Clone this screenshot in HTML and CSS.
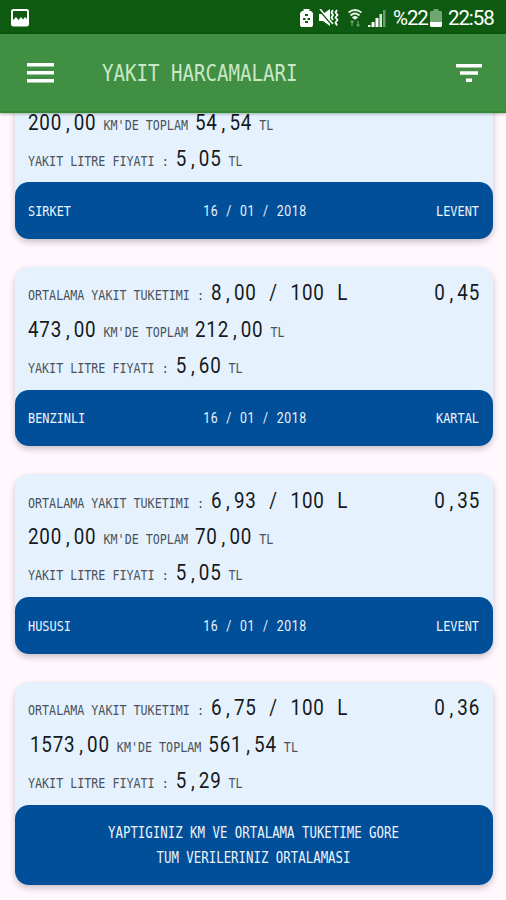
FILE: index.html
```html
<!DOCTYPE html>
<html lang="tr">
<head>
  <meta charset="UTF-8">
  <meta name="viewport" content="width=device-width, initial-scale=1.0">
  <title>Yakit Harcamalari</title>
  <link rel="stylesheet" href="styles.css">
</head>
<body>

<div class="status-bar">
  <svg class="icon-picture" width="18" height="18" viewBox="0 0 18 18">
    <rect x="1" y="1" width="16" height="15.5" rx="1.5" fill="none" stroke="#fff" stroke-width="2"/>
    <path d="M2 11l3-3 2.500 3L10 8l2 2.500L14 8l2 2v6H2z" fill="#fff"/>
  </svg>
  <div class="status-right">
    <svg class="icon-saver" width="13" height="18" viewBox="0 0 13 18">
      <path d="M3.500 2V0h6v2H11l2 2v12.500L12 18H1l-1-1.500V4l2-2z" fill="#fff"/>
      <path d="M5 5h3v2H5zM3 9h2.500v2H3zM7.500 9H10v2H7.500zM5 12h3v2H5z" fill="#0d5a10"/>
    </svg>
    <svg class="icon-mute" width="20" height="18" viewBox="0 0 20 18">
      <path d="M0 5h4l7-5v17l-7-5H0z" fill="#fff"/>
      <path d="M0 1l14 16" stroke="#0d5a10" stroke-width="1.500"/>
      <path d="M1 0l13 15" stroke="#fff" stroke-width="1.500"/>
      <path d="M14 1l-1.500 2.500L14 6l-1.500 2.500L14 11M18 1l-1.500 2.500L18.500 6l-2 2.500 2 2.500-2 2.500 1.500 3" fill="none" stroke="#fff" stroke-width="1.800"/>
    </svg>
    <svg class="icon-wifi" width="14" height="18" viewBox="0 0 14 18">
      <path d="M.5 3.500Q7-1.500 13.500 3.500M2.500 6.500Q7 2.500 11.500 6.500M4.500 9Q7 7 9.500 9" fill="none" stroke="#e5efe5" stroke-width="1.800"/>
      <path d="M5.500 9h3L7 11z" fill="#fff"/>
      <path d="M4 17v-5M2.500 13.500L4 12l1.500 1.500M10 12v5M8.500 15.500L10 17l1.500-1.500" fill="none" stroke="#6b9c6d" stroke-width="1.300"/>
    </svg>
    <svg class="icon-signal" width="18" height="18" viewBox="0 0 18 18">
      <path d="M0 16h2.500v2H0zM3.500 13H6.500v5h-3zM7.500 9h3v9h-3z" fill="#fff"/>
      <path d="M11.500 5H14v13h-2.500z" fill="#d7e6d7"/>
      <path d="M15 1h2.500v17H15z" fill="#6b9c6d"/>
    </svg>
    <span class="percent">%22</span>
    <svg class="icon-battery" width="12" height="18" viewBox="0 0 12 18">
      <path d="M3.500 0h5v2H11l1 1v10H0V3l1-1h2.500z" fill="#6fa770"/>
      <path d="M0 13h12v4l-1 1H1l-1-1z" fill="#fff"/>
    </svg>
    <span class="clock">22:58</span>
  </div>
</div>

<header class="toolbar">
  <svg class="icon-menu" width="27" height="20" viewBox="0 0 27 20">
    <path d="M0 0h27v3.500H0zM0 8h27v3.500H0zM0 16h27v3.500H0z" fill="#fff"/>
  </svg>
  <h1>YAKIT HARCAMALARI</h1>
  <svg class="icon-filter" width="26" height="18" viewBox="0 0 26 18">
    <path d="M0 0h26v3.500H0zM4 7.300h18v3.500H4zM10 14.500h6V18h-6z" fill="#fff"/>
  </svg>
</header>

<main class="list">
  <div class="card partial">
    <div class="card-body">
      <div class="row"><b>200<i>,</i>00</b> KM'DE TOPLAM <b>54<i>,</i>54</b> TL</div>
      <div class="row">YAKIT LITRE FIYATI : <b>5<i>,</i>05</b> TL</div>
    </div>
    <div class="card-footer">
      <span>SIRKET</span><span class="date">16 / 01 / 2018</span><span>LEVENT</span>
    </div>
  </div>

  <div class="card">
    <div class="card-body">
      <div class="row">ORTALAMA YAKIT TUKETIMI : <b>8<i>,</i>00 / 100 L</b><b class="rate">0<i>,</i>45</b></div>
      <div class="row"><b>473<i>,</i>00</b> KM'DE TOPLAM <b>212<i>,</i>00</b> TL</div>
      <div class="row">YAKIT LITRE FIYATI : <b>5<i>,</i>60</b> TL</div>
    </div>
    <div class="card-footer">
      <span>BENZINLI</span><span class="date">16 / 01 / 2018</span><span>KARTAL</span>
    </div>
  </div>

  <div class="card">
    <div class="card-body">
      <div class="row">ORTALAMA YAKIT TUKETIMI : <b>6<i>,</i>93 / 100 L</b><b class="rate">0<i>,</i>35</b></div>
      <div class="row"><b>200<i>,</i>00</b> KM'DE TOPLAM <b>70<i>,</i>00</b> TL</div>
      <div class="row">YAKIT LITRE FIYATI : <b>5<i>,</i>05</b> TL</div>
    </div>
    <div class="card-footer">
      <span>HUSUSI</span><span class="date">16 / 01 / 2018</span><span>LEVENT</span>
    </div>
  </div>

  <div class="card">
    <div class="card-body">
      <div class="row">ORTALAMA YAKIT TUKETIMI : <b>6<i>,</i>75 / 100 L</b><b class="rate">0<i>,</i>36</b></div>
      <div class="row total"><b>1573<i>,</i>00</b> KM'DE TOPLAM <b>561<i>,</i>54</b> TL</div>
      <div class="row">YAKIT LITRE FIYATI : <b>5<i>,</i>29</b> TL</div>
    </div>
    <div class="card-footer summary">
      <span>YAPTIGINIZ KM VE ORTALAMA TUKETIME GORE</span>
      <span>TUM VERILERINIZ ORTALAMASI</span>
    </div>
  </div>
</main>

</body>
</html>
```
FILE: styles.css
```css
* {
  box-sizing: border-box;
}
body {
  margin: 0;
  height: 900px;
  overflow: hidden;
  background: #fff8fc;
  font-family: "DejaVu Sans Mono", monospace;
}

/* status bar */
.status-bar {
  height: 34px;
  padding: 1px 12px 0 11px;
  display: flex;
  align-items: center;
  justify-content: space-between;
  background: #0d5a10;
  color: #fff;
}
.status-right {
  display: flex;
  align-items: center;
}
.icon-mute {
  margin-left: 6px;
}
.icon-wifi {
  margin-left: 9px;
}
.icon-signal {
  margin-left: 6px;
}
.percent,
.clock {
  font: 20.5px/24px Roboto, sans-serif;
  letter-spacing: -1.1px;
}
.percent {
  width: 34px;
  margin-left: 7px;
}
.icon-battery {
  margin-left: 3px;
}
.clock {
  width: 46px;
  margin-left: 6px;
}

/* toolbar */
.toolbar {
  position: relative;
  z-index: 1;
  height: 79px;
  padding: 0 24px 0 27px;
  display: flex;
  align-items: center;
  background: #408f43;
  border-bottom: 2px solid #2f8a30;
  box-shadow: 0 1px 3px rgba(0, 0, 0, 0.3);
}
.toolbar h1 {
  margin: 0 auto 0 48px;
  color: #c9e8c8;
  font-size: 19.1px;
  font-weight: normal;
  transform: scaleY(1.24);
}

/* cards */
.list {
  height: 787px;
  padding: 0 13px 0 15px;
  overflow: hidden;
}
.card {
  margin-bottom: 28px;
  background: #e5f2fe;
  border-radius: 14px;
  box-shadow: 0 3px 6px rgba(60, 30, 50, 0.26);
}
.card-body {
  height: 123px;
  padding: 9.8px 13px 0;
}
.partial {
  border-radius: 0 0 14px 14px;
}
.partial .card-body {
  height: 77px;
  margin-top: -8px;
  padding-top: 0.5px;
}
/* tall narrow LCD look, stretched up from the baseline */
.row {
  display: flex;
  align-items: baseline;
  height: 36.3px;
  line-height: 36px;
  font-size: 11.7px;
  white-space: pre;
  color: #4a535b;
  transform: scaleY(1.22);
  transform-origin: 0 24.5px;
}
.row b {
  font: 400 18.8px/36px Roboto, sans-serif;
  letter-spacing: 0.8px;
  word-spacing: 7.2px;
  color: #15191c;
}
.row i {
  font-style: normal;
  padding: 0 3.4px 0 3.8px;
}
.row .rate {
  margin-left: auto;
  margin-right: 0;
}
.total {
  padding-left: 2px;
}

.card-footer {
  height: 56.5px;
  padding: 1px 14px 0 13px;
  display: grid;
  grid-template-columns: 1fr auto 1fr;
  align-items: center;
  border-radius: 14px;
  background: #014f98;
  color: #edf4ff;
  font-size: 11.9px;
}
.card-footer span {
  transform: scaleY(1.24);
}
.card-footer span:last-child {
  text-align: right;
}
.card-footer .date {
  font-family: Roboto, sans-serif;
  font-size: 12.3px;
  letter-spacing: 0.6px;
  word-spacing: 4.4px;
  margin-right: -4px;
  margin-left: -1px;
}
.card-footer .date + span {
  margin-left: 4px;
}
.card-footer.summary {
  height: 80px;
  display: flex;
  flex-direction: column;
  align-items: center;
  justify-content: center;
  gap: 10px;
  font-size: 12.4px;
}
```
